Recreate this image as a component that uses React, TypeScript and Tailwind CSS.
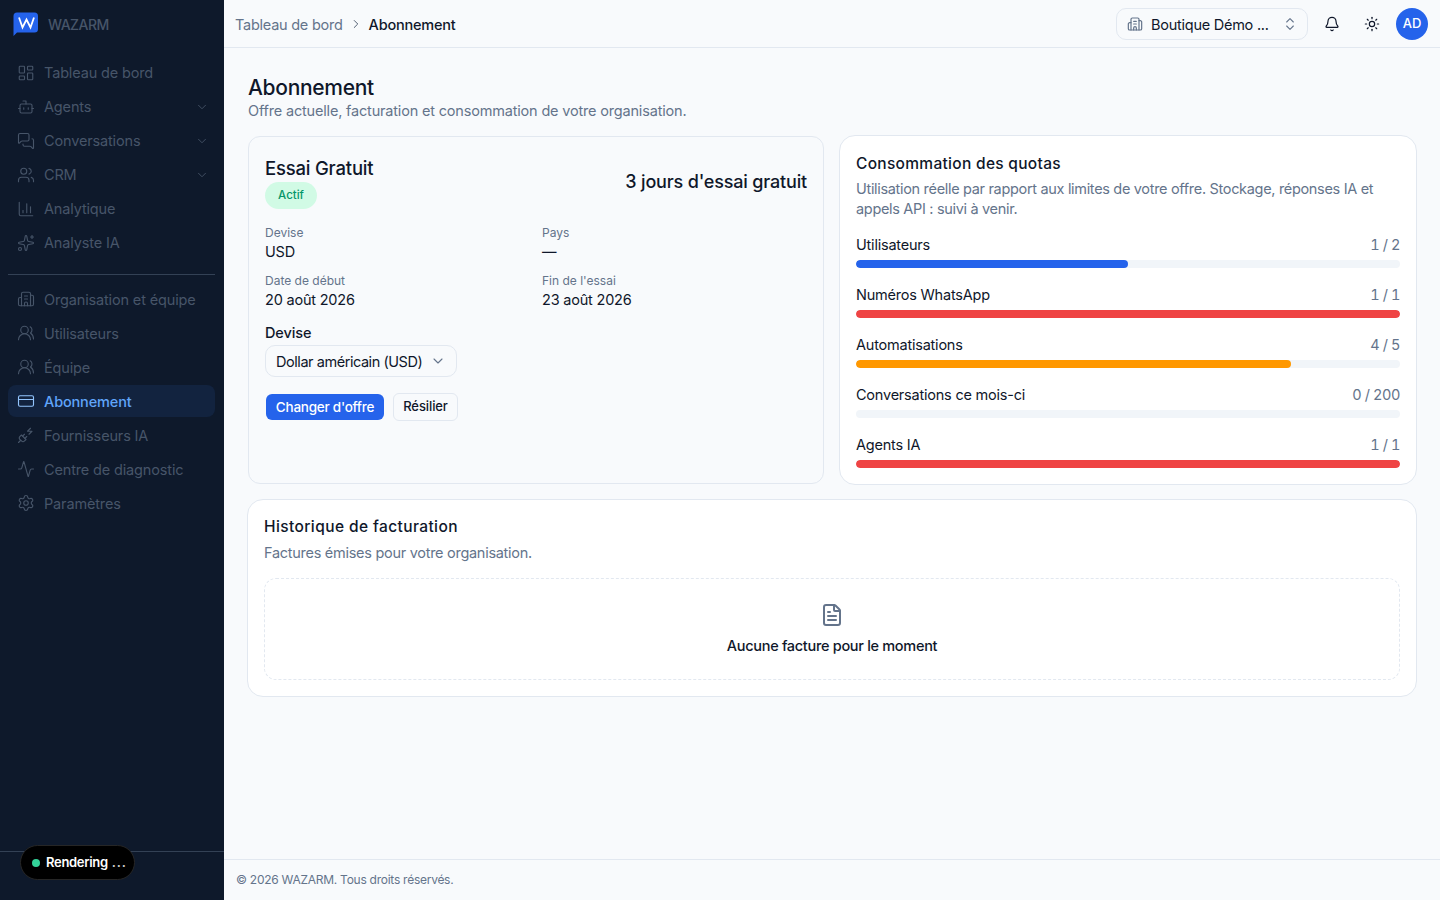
import React from "react";
import { LayoutDashboard, Bot, MessagesSquare, Users, ChartColumn, Sparkles, Building2, UsersRound, CreditCard, PlugZap, Activity, Settings, ChevronDown, ChevronRight, ChevronsUpDown, Bell, Sun, FileText } from "lucide-react";

const top = [
  { l: "Tableau de bord", I: LayoutDashboard },
  { l: "Agents", I: Bot, c: true },
  { l: "Conversations", I: MessagesSquare, c: true },
  { l: "CRM", I: Users, c: true },
  { l: "Analytique", I: ChartColumn },
  { l: "Analyste IA", I: Sparkles },
];
const bottom = [
  { l: "Organisation et équipe", I: Building2 },
  { l: "Utilisateurs", I: UsersRound },
  { l: "Équipe", I: UsersRound },
  { l: "Abonnement", I: CreditCard, a: true },
  { l: "Fournisseurs IA", I: PlugZap },
  { l: "Centre de diagnostic", I: Activity },
  { l: "Paramètres", I: Settings },
];
const quotas = [
  { l: "Utilisateurs", v: "1 / 2", w: "50%", c: "bg-[#2563eb]" },
  { l: "Numéros WhatsApp", v: "1 / 1", w: "100%", c: "bg-[#ef4444]" },
  { l: "Automatisations", v: "4 / 5", w: "80%", c: "bg-[#ff9800]" },
  { l: "Conversations ce mois-ci", v: "0 / 200", w: "0%", c: "bg-[#2563eb]" },
  { l: "Agents IA", v: "1 / 1", w: "100%", c: "bg-[#ef4444]" },
];

function Item({ l, I, c, a, low }: any) {
  return (
    <div className={`flex h-8 items-center gap-[9px] rounded-lg pl-[9px] pr-[6px] text-[14.5px] tracking-[-0.15px] ${a ? "bg-[#12233f] font-medium text-[#60a5fa]" : "text-[#475569]"}`}>
      <I size={18} strokeWidth={1.5} className={a ? "text-[#93c5fd]" : "text-[#475569]"} />
      <span className={`flex-1 ${low ? "pt-[2px]" : ""}`}>{l}</span>
      {c && <ChevronDown size={14} strokeWidth={1.5} />}
    </div>
  );
}

function Info({ k, v }: { k: string; v: string }) {
  return (
    <div className="h-[48px]">
      <div className="text-[12px] leading-[16px] text-[#64748b]">{k}</div>
      <div className="mt-[1px] text-[14.5px] leading-[20px] tracking-[-0.2px] text-[#0f172a]">{v}</div>
    </div>
  );
}

export default function App() {
  return (
    <div className="relative flex h-[900px] w-[1440px] overflow-hidden bg-[#f8fafc] font-['Inter',sans-serif] text-[#0f172a]">
      <aside className="flex w-[224px] shrink-0 flex-col bg-[#0e192b]">
        <div className="flex h-[48px] items-center gap-[9px] pl-[13px]">
          <svg width="26" height="24" viewBox="0 0 26 24" aria-hidden="true">
            <path d="M4 0.5h17.5a3.5 3.5 0 0 1 3.5 3.5v13a3.5 3.5 0 0 1-3.5 3.5H4L0.5 24V4A3.5 3.5 0 0 1 4 0.5Z" fill="#2563eb" />
            <path d="M6 5.5L9.5 15.5L13.5 7.5L17.5 15.5L21 5.5" fill="none" stroke="#fff" strokeWidth="1.8" strokeLinejoin="miter" />
          </svg>
          <span className="pt-px text-[14px] font-medium tracking-[-0.5px] text-[#475569]">WAZARM</span>
        </div>
        <nav className="flex flex-col gap-[2px] pl-2 pr-[9px] pt-[9px]">
          {top.map((x) => <Item key={x.l} {...x} />)}
        </nav>
        <div className="ml-2 mr-[9px] mb-[8px] mt-[15px] h-px bg-[#334155]" />
        <nav className="flex flex-col gap-[2px] pl-2 pr-[9px]">
          {bottom.map((x) => <Item key={x.l} {...x} low />)}
        </nav>
        <div className="mt-auto h-[49px] border-t border-[#334155]" />
      </aside>

      <div className="flex min-w-0 flex-1 flex-col">
        <header className="flex h-[48px] shrink-0 items-center border-b border-[#e2e8f0] pl-[11px] pr-3">
          <span className="pt-[2px] text-[14.5px] tracking-[-0.25px] text-[#64748b]">Tableau de bord</span>
          <ChevronRight size={14} strokeWidth={1.6} className="mx-[6px] text-[#475569]" />
          <span className="pt-[2px] text-[14.5px] font-[450] tracking-[-0.2px]">Abonnement</span>
          <div className="ml-auto flex h-8 w-[192px] items-center rounded-[10px] border border-[#e2e8f0] pl-[10px] pr-[9px]">
            <Building2 size={16} strokeWidth={1.8} className="text-[#64748b]" />
            <span className="ml-[8px] flex-1 pt-[2px] text-[14.5px] tracking-[-0.25px]">Boutique Démo ...</span>
            <ChevronsUpDown size={16} strokeWidth={1.6} className="text-[#64748b]" />
          </div>
          <Bell size={16} strokeWidth={1.8} className="ml-4" />
          <Sun size={16} strokeWidth={1.8} className="ml-6" />
          <div className="ml-4 flex h-8 w-8 items-center justify-center rounded-full bg-[#2563eb] text-[13px] font-medium text-white">AD</div>
        </header>

        <main className="flex-1 px-[23px] pt-[27px]">
          <div className="pl-px">
            <h1 className="text-[21px] font-medium leading-[26px] tracking-[-0.3px]">Abonnement</h1>
            <p className="text-[14.5px] leading-[20px] tracking-[-0.18px] text-[#64748b]">Offre actuelle, facturation et consommation de votre organisation.</p>
          </div>
          <div className="mt-[14px] grid grid-cols-2 gap-[14px]">
            <section className="m-px rounded-xl border border-[#e2e8f0] p-4">
              <div className="flex items-start justify-between">
                <div>
                  <h2 className="text-[18.5px] font-medium leading-[30px] tracking-[-0.2px]">Essai Gratuit</h2>
                  <span className="-mt-px flex h-[27px] w-[52px] items-center justify-center rounded-full bg-[#d1fae5] text-[11.5px] font-medium text-[#059669]">Actif</span>
                </div>
                <span className="mt-[15px] text-[18px] font-medium leading-[28px] tracking-[-0.17px]">3 jours d'essai gratuit</span>
              </div>
              <div className="mt-[16px] grid grid-cols-[277px_1fr]">
                <Info k="Devise" v="USD" />
                <Info k="Pays" v="—" />
                <Info k="Date de début" v="20 août 2026" />
                <Info k="Fin de l'essai" v="23 août 2026" />
              </div>
              <div className="mt-[2px] text-[14.5px] font-[450] leading-[20px] tracking-[-0.1px]">Devise</div>
              <div className="mt-[2px] flex h-8 w-[192px] items-center rounded-[10px] border border-[#e2e8f0] pl-[10px] pr-[10px]">
                <span className="flex-1 pt-[2px] text-[14.5px] tracking-[-0.45px]">Dollar américain (USD)</span>
                <ChevronDown size={16} strokeWidth={1.6} className="text-[#64748b]" />
              </div>
              <div className="mt-[16px] flex items-center gap-[9px]">
                <button className="ml-px h-[26px] w-[118px] rounded-md bg-[#2563eb] text-[13.5px] font-medium tracking-[-0.25px] text-white">Changer d'offre</button>
                <button className="h-[28px] w-[65px] rounded-md border border-[#e2e8f0] text-[13px] font-medium tracking-[-0.1px]">Résilier</button>
              </div>
            </section>

            <section className="h-[350px] rounded-2xl border border-[#e2e8f0] bg-white px-4 pt-[17px]">
              <h2 className="text-[15.5px] font-[550] leading-[22px] tracking-[0.3px]">Consommation des quotas</h2>
              <p className="mt-[4px] text-[14.5px] leading-[20px] tracking-[-0.32px] text-[#64748b]">Utilisation réelle par rapport aux limites de votre offre. Stockage, réponses IA et appels API : suivi à venir.</p>
              <div className="mt-[6px] flex flex-col">
                {quotas.map((q) => (
                  <div key={q.l} className="h-[50px] pt-[10px]">
                    <div className="flex justify-between text-[14.5px] leading-[20px] tracking-[-0.22px]">
                      <span>{q.l}</span>
                      <span className="tabular-nums tracking-[-0.4px] text-[#64748b]">{q.v}</span>
                    </div>
                    <div className="mt-[5px] h-2 overflow-hidden rounded-full bg-[#f1f5f9]">
                      <div className={`h-full rounded-full ${q.c}`} style={{ width: q.w }} />
                    </div>
                  </div>
                ))}
              </div>
            </section>
          </div>

          <section className="mt-[14px] h-[198px] rounded-2xl border border-[#e2e8f0] bg-white px-4 pt-4">
            <h2 className="text-[15.5px] font-[550] leading-[22px] tracking-[0.4px]">Historique de facturation</h2>
            <p className="mt-[5px] text-[14.5px] leading-[20px] tracking-[-0.28px] text-[#64748b]">Factures émises pour votre organisation.</p>
            <div className="mt-[15px] flex h-[102px] flex-col items-center rounded-xl border border-dashed border-[#e2e8f0] pt-[24px]">
              <FileText size={24} strokeWidth={2} className="text-[#64748b]" />
              <span className="mt-[9px] text-[14.5px] font-[450] leading-[20px] tracking-[-0.3px]">Aucune facture pour le moment</span>
            </div>
          </section>
        </main>

        <footer className="flex h-[41px] shrink-0 items-center border-t border-[#e2e8f0] pl-3 text-[12px] tracking-[-0.26px] text-[#64748b]">© 2026 WAZARM. Tous droits réservés.</footer>
      </div>

      <div className="absolute left-[20px] top-[845px] flex h-[35px] w-[115px] items-center rounded-full border border-[#262626] bg-black pl-[11px] text-[13px] font-semibold tracking-[-0.3px] text-white">
        <span className="mr-[6px] h-2 w-2 rounded-full bg-[#34d399]" />
        Rendering <span className="ml-[4px] tracking-[0.8px] text-[#ccc]">...</span>
      </div>
    </div>
  );
}
